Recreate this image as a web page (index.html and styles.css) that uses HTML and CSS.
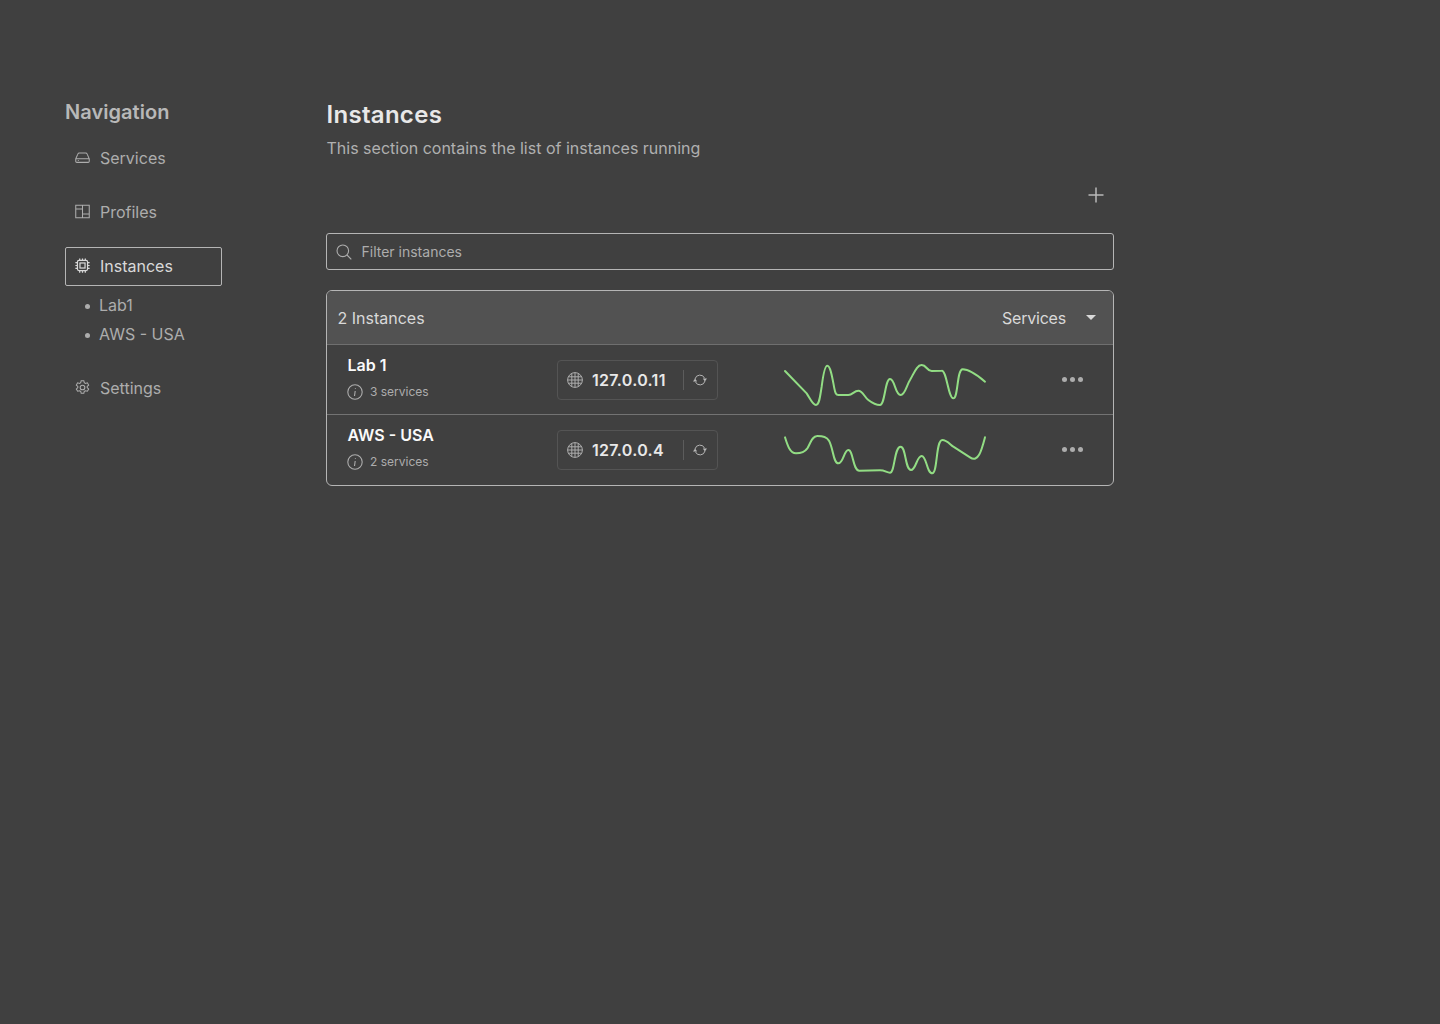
FILE: index.html
```html
<!DOCTYPE html>
<html lang="en">
<head>
  <meta charset="UTF-8">
  <title>Instances</title>
  <link rel="stylesheet" href="styles.css">
</head>
<body>
  <div class="page">
    <nav class="sidebar">
      <h2 class="sidebar-title">Navigation</h2>
      <a class="nav-item">
        <svg class="nav-icon" viewBox="0 0 16 16"><path d="M.8 9.400 3 4.400C3.300 3.600 3.800 3.200 4.600 3.200h6.800c.8 0 1.300.4 1.600 1.200l2.200 5v2.600c0 .8-.5 1.200-1.200 1.200H2c-.7 0-1.200-.4-1.200-1.200zM.8 9.400h14.400M3 11.200h1"/></svg>
        Services
      </a>
      <a class="nav-item">
        <svg class="nav-icon" viewBox="0 0 16 16"><path d="M.8 1.400h14.400v13.200H.8zM8 1.400v13.200M.8 5.400H8M8 10.600h7.200"/></svg>
        Profiles
      </a>
      <a class="nav-item active">
        <svg class="nav-icon chip-icon" viewBox="0 0 16 16"><rect x="2.600" y="2.600" width="10.800" height="10.800" rx="1.600"/><rect x="5.300" y="5.300" width="5.400" height="5.400"/><path d="M5 .4v2.200M8 .4v2.200M11 .4v2.200M5 13.400v2.200M8 13.400v2.200M11 13.400v2.200M.4 5h2.200M.4 8h2.200M.4 11h2.200M13.400 5h2.200M13.400 8h2.200M13.400 11h2.200"/></svg>
        Instances
      </a>
      <ul class="sub-list">
        <li>Lab1</li>
        <li>AWS - USA</li>
      </ul>
      <a class="nav-item">
        <svg class="nav-icon" viewBox="0 0 16 16"><path d="M6.600.8h2.800l.5 2.100 1.200.7 2.100-.6 1.400 2.400-1.600 1.500v1.200l1.600 1.500-1.400 2.400-2.100-.6-1.200.7-.5 2.100H6.600l-.5-2.100-1.200-.7-2.100.6-1.400-2.400 1.600-1.500V6.900L1.400 5.400l1.400-2.400 2.100.6 1.200-.7z"/><circle cx="8" cy="8" r="2.500"/></svg>
        Settings
      </a>
    </nav>

    <main class="content">
      <h1 class="content-title">Instances</h1>
      <p class="content-desc">This section contains the list of instances running</p>

      <div class="toolbar">
        <svg class="add-icon" viewBox="0 0 16 16"><path d="M8 .5v15M.5 8h15"/></svg>
      </div>

      <div class="search-box">
        <svg class="search-icon" viewBox="0 0 16 16"><circle cx="6.800" cy="6.800" r="5.800"/><path d="m11 11 4.300 4.300"/></svg>
        <span>Filter instances</span>
      </div>

      <section class="instances">
        <header class="instances-head">
          <span>2 Instances</span>
          <div class="services-select">
            <span class="services-label">Services</span>
            <span class="caret"></span>
          </div>
        </header>

        <div class="instance-row">
          <div class="instance-info">
            <div class="instance-name">Lab 1</div>
            <div class="instance-meta">
              <svg class="info-icon" viewBox="0 0 16 16"><circle cx="8" cy="8" r="7.200"/><path d="M8.400 4.200v.8M8.200 7l-.7 5"/></svg>
              3 services
            </div>
          </div>
          <div class="ip-box">
            <svg class="globe-icon" viewBox="0 0 16 16"><circle cx="8" cy="8" r="7.400"/><path d="M4.800 1.400v13.200M8 .6v14.800M11.200 1.400v13.200M1.400 4.800h13.200M.6 8h14.800M1.400 11.200h13.200"/></svg>
            <span class="ip-text">127.0.0.11</span>
            <span class="ip-sep"></span>
            <svg class="refresh-icon" viewBox="0 0 16 16"><path d="M2.300 6.800a5.800 5.800 0 0 1 11-.8M13.700 9.200a5.800 5.800 0 0 1-11 .8"/><path class="filled" d="m11.200 6.200 4.800.1-2.400 3.400zM4.800 9.800 0 9.700l2.400-3.400z"/></svg>
          </div>
          <svg class="sparkline" viewBox="45 24 600 132"><path d="M45 63 L110 130 C120 145 128 165 138 165 C148 165 150 140 155 110 C160 70 165 47 172 47 C182 47 188 90 193 115 C196 130 198 135 205 135 L235 135 C248 135 252 122 265 122 C278 122 282 140 295 150 C308 160 318 165 330 165 C345 165 345 87 360 87 C375 87 375 135 392 135 C405 135 410 105 420 90 C432 70 440 45 455 45 C470 45 470 63 485 63 L515 62 C530 60 535 145 550 145 C565 145 560 58 578 58 C595 58 625 78 645 95"/></svg>
          <div class="row-menu"><i></i><i></i><i></i></div>
        </div>

        <div class="instance-row">
          <div class="instance-info">
            <div class="instance-name">AWS - USA</div>
            <div class="instance-meta">
              <svg class="info-icon" viewBox="0 0 16 16"><circle cx="8" cy="8" r="7.200"/><path d="M8.400 4.200v.8M8.200 7l-.7 5"/></svg>
              2 services
            </div>
          </div>
          <div class="ip-box">
            <svg class="globe-icon" viewBox="0 0 16 16"><circle cx="8" cy="8" r="7.400"/><path d="M4.800 1.400v13.200M8 .6v14.800M11.200 1.400v13.200M1.400 4.800h13.200M.6 8h14.800M1.400 11.200h13.200"/></svg>
            <span class="ip-text">127.0.0.4</span>
            <span class="ip-sep"></span>
            <svg class="refresh-icon" viewBox="0 0 16 16"><path d="M2.300 6.800a5.800 5.800 0 0 1 11-.8M13.700 9.200a5.800 5.800 0 0 1-11 .8"/><path class="filled" d="m11.200 6.200 4.800.1-2.400 3.400zM4.800 9.800 0 9.700l2.400-3.400z"/></svg>
          </div>
          <svg class="sparkline" viewBox="45 234 600 132"><path d="M45 262 C52 285 60 310 78 310 C95 310 105 305 112 295 C122 280 125 258 142 258 C160 258 170 260 177 272 C190 295 190 340 205 340 C220 340 222 300 235 300 C250 300 248 362 268 362 L330 361 C345 361 350 368 360 368 C375 368 372 290 392 290 C408 290 405 360 423 360 C438 360 440 318 455 318 C470 318 470 370 487 370 C503 370 497 270 517 270 C530 270 540 283 550 290 L600 322 C625 340 635 300 645 262"/></svg>
          <div class="row-menu"><i></i><i></i><i></i></div>
        </div>
      </section>
    </main>
  </div>
</body>
</html>
```

FILE: styles.css
```css
:root {
  --bg-color: #404040;
  --head-bg: #525252;
  --text-muted: #adadad;
  --text-soft: #d9d9d9;
  --text-strong: #fafafa;
  --line-color: #b5b5b5;
  --spark-color: #92dd84;
}

* {
  box-sizing: border-box;
}

body {
  margin: 0;
  min-height: 1024px;
  background-color: var(--bg-color);
  color: var(--text-soft);
  font-family: 'Inter', 'Liberation Sans', sans-serif;
  overflow: hidden;
}

svg {
  fill: none;
  stroke: currentColor;
  stroke-width: 1.100;
  flex-shrink: 0;
}

.page {
  display: flex;
  gap: 104px;
  padding: 100px 0 0 65px;
}

/* Sidebar */
.sidebar {
  width: 157px;
}

.sidebar-title {
  margin: 0 0 14px;
  font-size: 20px;
  line-height: 24px;
  font-weight: 600;
  letter-spacing: 0.05px;
  color: #b8b8b8;
}

.nav-item {
  display: flex;
  align-items: center;
  gap: 10px;
  height: 39px;
  margin-bottom: 15px;
  padding-left: 9px;
  font-size: 16px;
  color: var(--text-muted);
  border: 1px solid transparent;
  border-radius: 2px;
}

.nav-item.active {
  margin: 16px 0 0;
  padding-bottom: 2px;
  color: var(--text-soft);
  border-color: var(--line-color);
}

.nav-icon {
  width: 15px;
  height: 15px;
}

.chip-icon {
  stroke-width: 1.300;
}

.sub-list {
  margin: 5px 0 19px;
  padding: 0 0 0 34px;
  list-style: none;
  font-size: 16px;
  line-height: 29px;
  color: var(--text-muted);
}

.sub-list li {
  position: relative;
}

.sub-list li::before {
  content: "";
  position: absolute;
  left: -14.500px;
  top: 13px;
  width: 5px;
  height: 5px;
  border-radius: 50%;
  background-color: var(--text-muted);
}

/* Content */
.content {
  width: 788px;
}

.content-title {
  margin: 0;
  padding-left: 0.5px;
  font-size: 24px;
  line-height: 30px;
  font-weight: 600;
  letter-spacing: 0.3px;
  color: #e8e8e8;
}

.content-desc {
  margin: 8px 0 0;
  padding-left: 0.5px;
  font-size: 16px;
  line-height: 20px;
  color: #b0b0b0;
}

.toolbar {
  display: flex;
  justify-content: flex-end;
  padding: 29px 10px 0 0;
  height: 75px;
}

.add-icon {
  width: 16px;
  height: 16px;
  color: #b8b8b8;
  stroke-width: 1.500;
}

.search-box {
  display: flex;
  align-items: center;
  gap: 9px;
  height: 37px;
  padding-left: 9px;
  font-size: 14px;
  color: var(--text-muted);
  border: 1px solid var(--line-color);
  border-radius: 3px;
}

.search-box span {
  padding-left: 0.5px;
}

.search-icon {
  width: 16px;
  height: 16px;
}

.instances {
  margin-top: 20px;
  border: 1px solid var(--line-color);
  border-radius: 6px;
  overflow: hidden;
}

.instances-head {
  display: flex;
  align-items: center;
  justify-content: space-between;
  height: 54px;
  padding: 0 17px 0 10.500px;
  font-size: 16px;
  color: var(--text-soft);
  background-color: var(--head-bg);
  border-bottom: 1px solid #6f6f6f;
}

.services-select {
  display: flex;
  align-items: center;
  gap: 20px;
}

.services-label {
  letter-spacing: -0.2px;
}

.caret {
  width: 0;
  height: 0;
  border-left: 5.500px solid transparent;
  border-right: 5.500px solid transparent;
  border-top: 5px solid var(--text-soft);
}

.instance-row {
  display: flex;
  align-items: center;
  height: 70px;
  padding-left: 20px;
  border-bottom: 1px solid #737373;
}

.instance-row:last-child {
  border-bottom: none;
}

.instance-row:last-child .instance-info {
  padding-bottom: 6px;
}

.instance-row:last-child .row-menu {
  margin-bottom: 1px;
}

.instance-info {
  width: 210px;
  padding-bottom: 4px;
}

.instance-name {
  padding-left: 0.5px;
  font-size: 16px;
  line-height: 20px;
  font-weight: 600;
  color: var(--text-strong);
}

.instance-meta {
  display: flex;
  align-items: center;
  gap: 7px;
  margin-top: 9px;
  font-size: 12px;
  line-height: 16px;
  color: var(--text-muted);
}

.info-icon {
  width: 16px;
  height: 16px;
}

.ip-box {
  display: flex;
  align-items: center;
  width: 161px;
  height: 40px;
  padding-left: 9px;
  border: 1px solid #545454;
  border-radius: 4px;
}

.globe-icon {
  width: 16px;
  height: 16px;
  color: var(--text-muted);
  stroke-width: 1;
}

.ip-text {
  width: 91px;
  margin-left: 9px;
  font-size: 16px;
  font-weight: 600;
  letter-spacing: 0.3px;
  color: #e8e8e8;
}

.ip-sep {
  width: 1px;
  height: 20px;
  background-color: #5c5c5c;
}

.refresh-icon {
  width: 14px;
  height: 14px;
  margin-left: 9px;
  color: #b8b8b8;
}

.refresh-icon .filled {
  fill: currentColor;
  stroke: none;
}

.sparkline {
  width: 200px;
  height: 44px;
  margin-left: 67px;
  overflow: visible;
  stroke: var(--spark-color);
  stroke-width: 6;
  stroke-linecap: round;
  stroke-linejoin: round;
}

.row-menu {
  display: flex;
  gap: 3px;
  margin-left: 77px;
}

.row-menu i {
  width: 5px;
  height: 5px;
  border-radius: 50%;
  background-color: var(--text-muted);
}
```
